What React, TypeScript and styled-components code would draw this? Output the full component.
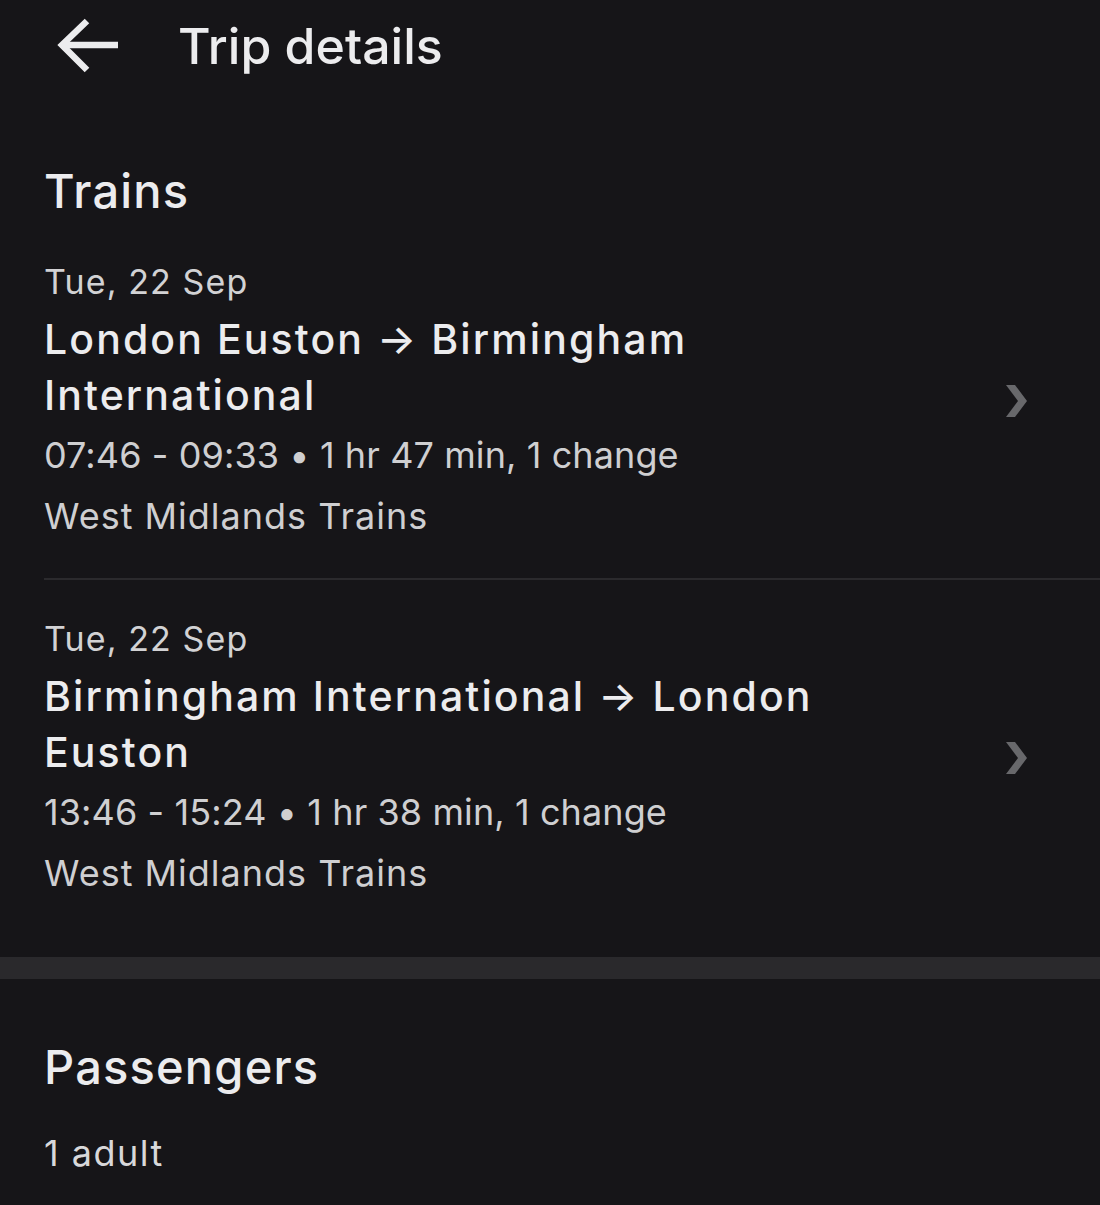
import React from "react";
import styled, { createGlobalStyle } from "styled-components";

const Global = createGlobalStyle`
  html, body { margin: 0; padding: 0; background: #161518; }
  body { font-family: Inter, "Noto Sans", sans-serif; -webkit-font-smoothing: antialiased; }
`;

const Page = styled.div`
  width: 1100px;
  min-height: 1205px;
  background: #161518;
  color: #ececee;
  overflow: hidden;
`;

const Header = styled.header`
  height: 92px;
  display: flex;
  align-items: center;
`;

const BackButton = styled.button`
  width: 178px;
  height: 92px;
  padding: 0 0 0 56px;
  border: none;
  background: none;
  display: flex;
  align-items: center;
  cursor: pointer;
`;

const Title = styled.h1`
  margin: 0;
  font-size: 50px;
  font-weight: 500;
  line-height: 92px;
  color: #ececee;
  letter-spacing: 0px;
`;

const Section = styled.section<{ $top: number }>`
  padding-top: ${(p) => p.$top}px;
`;

const SectionTitle = styled.h2`
  margin: 0;
  padding-left: 44px;
  font-size: 47px;
  font-weight: 500;
  line-height: 64px;
  color: #ececee;
  letter-spacing: 1.2px;
`;

const TripRow = styled.div<{ $divider: boolean }>`
  margin-left: 44px;
  padding: 36px 72px 36px 0;
  display: flex;
  align-items: center;
  border-bottom: ${(p) => (p.$divider ? "2px solid #2b2a2d" : "none")};
`;

const TripInfo = styled.div`
  flex: 1;
  display: flex;
  flex-direction: column;
`;

const DateText = styled.div`
  font-size: 34px;
  line-height: 46px;
  color: #d2d2d4;
  letter-spacing: 1.1px;
`;

const Route = styled.div`
  margin-top: 6px;
  font-size: 41px;
  font-weight: 500;
  line-height: 56px;
  color: #ececee;
  max-width: 820px;
  letter-spacing: 2.1px;
`;

const Meta = styled.div<{ $gap: number; $spacing: number }>`
  margin-top: ${(p) => p.$gap}px;
  font-size: 36px;
  line-height: 52px;
  color: #cfcfd1;
  letter-spacing: ${(p) => p.$spacing}px;
`;

const Chevron = styled.svg`
  width: 24px;
  height: 34px;
  flex-shrink: 0;
`;

const Band = styled.div`
  height: 22px;
  background: #2a292c;
  margin-top: 22px;
`;

const Value = styled.div`
  padding-left: 44px;
  margin-top: 28px;
  font-size: 36px;
  line-height: 52px;
  color: #d8d8da;
  letter-spacing: 1.5px;
`;

type Trip = { date: string; route: string; times: string; operator: string };

const trips: Trip[] = [
  {
    date: "Tue, 22 Sep",
    route: "London Euston \u2192 Birmingham International",
    times: "07:46 - 09:33 \u2022 1 hr 47 min, 1 change",
    operator: "West Midlands Trains",
  },
  {
    date: "Tue, 22 Sep",
    route: "Birmingham International \u2192 London Euston",
    times: "13:46 - 15:24 \u2022 1 hr 38 min, 1 change",
    operator: "West Midlands Trains",
  },
];

export default function App() {
  return (
    <Page>
      <Global />
      <Header>
        <BackButton aria-label="Back">
          <svg width="64" height="60" viewBox="0 0 64 60" fill="none">
            <path d="M62 29H7" stroke="#ececee" strokeWidth="6.5" />
            <path d="M31 5L6 29l25 25" stroke="#ececee" strokeWidth="6.5" strokeLinejoin="miter" />
          </svg>
        </BackButton>
        <Title>Trip details</Title>
      </Header>

      <Section $top={67}>
        <SectionTitle>Trains</SectionTitle>
        {trips.map((t, i) => (
          <TripRow key={i} $divider={i < trips.length - 1}>
            <TripInfo>
              <DateText>{t.date}</DateText>
              <Route>{t.route}</Route>
              <Meta $gap={6} $spacing={0.1}>{t.times}</Meta>
              <Meta $gap={9} $spacing={1.0}>{t.operator}</Meta>
            </TripInfo>
            <Chevron viewBox="0 0 24 34">
              <path d="M2 1h9l12 16-12 16H2l12-16z" fill="#68686b" />
            </Chevron>
          </TripRow>
        ))}
      </Section>
      <Band />

      <Section $top={56}>
        <SectionTitle>Passengers</SectionTitle>
        <Value>1 adult</Value>
      </Section>
    </Page>
  );
}
